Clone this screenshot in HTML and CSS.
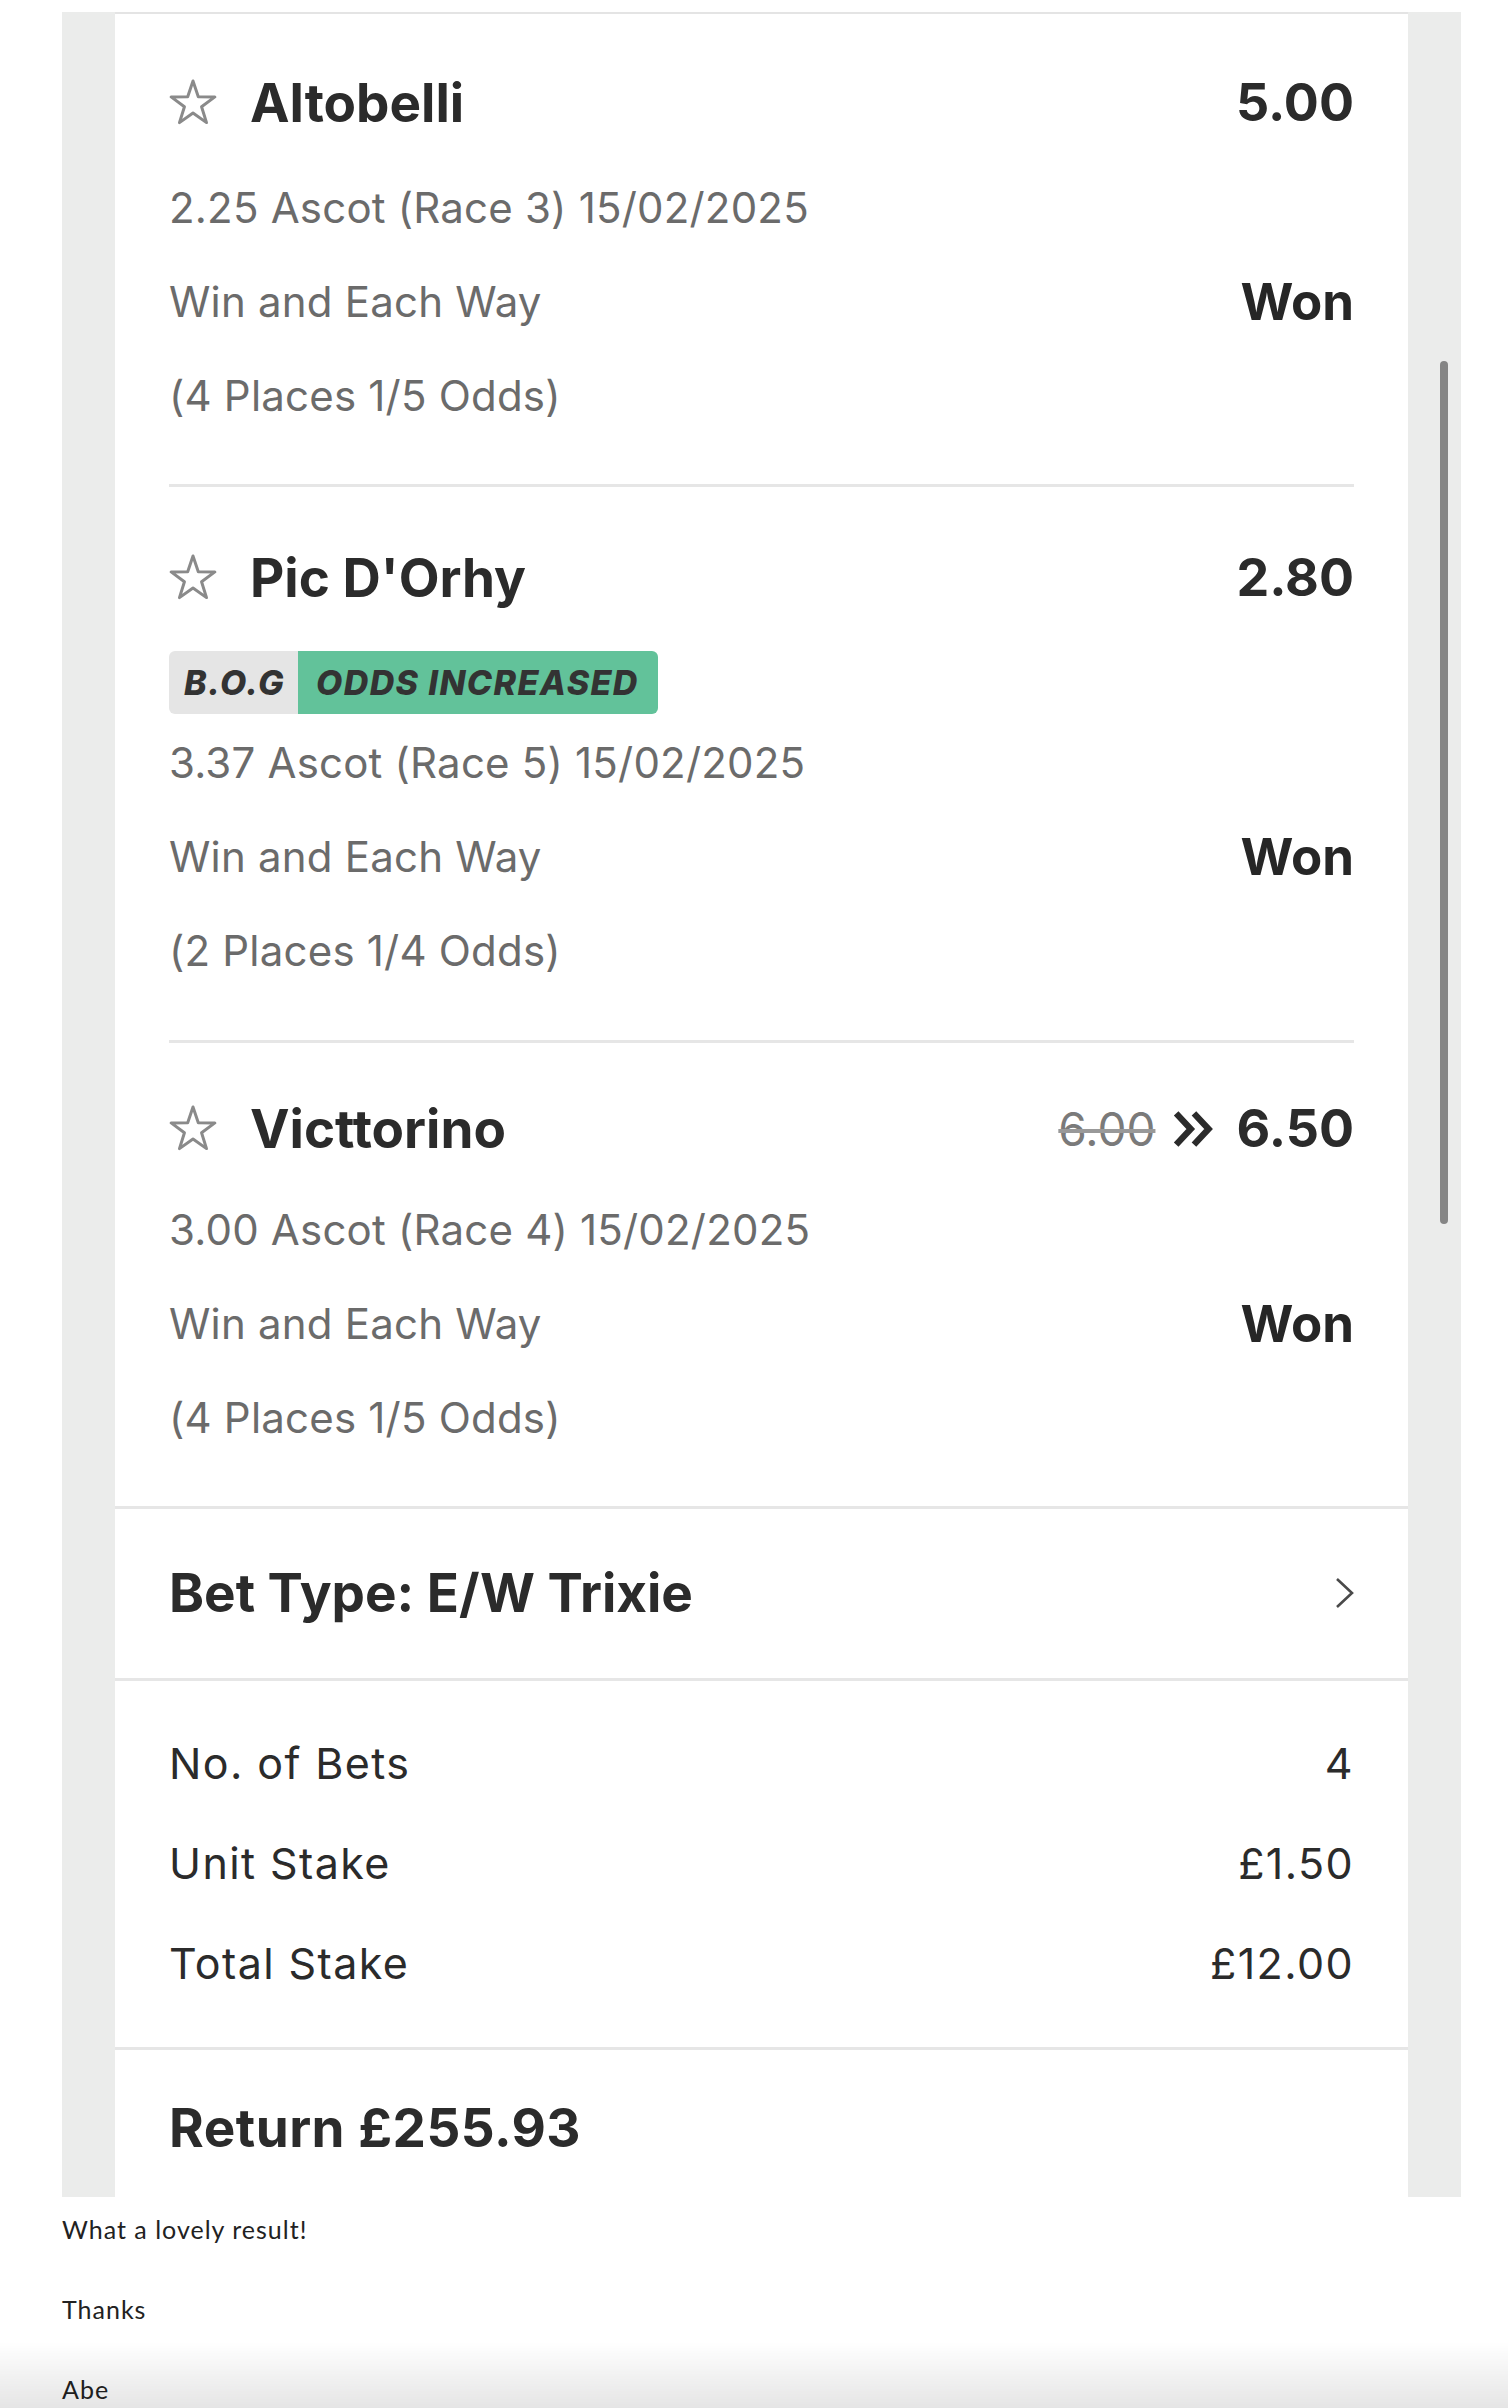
FILE: index.html
```html
<!DOCTYPE html>
<html lang="en">
<head>
<meta charset="utf-8">
<title>Bet receipt</title>
<link rel="stylesheet" href="styles.css">
</head>
<body>
<div class="page">
  <div class="panel">
    <div class="card">
      <div class="legs">
        <div class="leg leg-first">
          <div class="leg-head">
            <svg class="star" viewBox="0 0 48 48"><polygon points="24,2 29.29,17.72 45.87,17.89 32.56,27.78 37.52,43.61 24,34 10.48,43.61 15.44,27.78 2.13,17.89 18.71,17.72"/></svg>
            <span class="name">Altobelli</span>
            <span class="odds">5.00</span>
          </div>
          <div class="info">
            <div class="line">2.25 Ascot (Race 3) 15/02/2025</div>
            <div class="line"><span>Win and Each Way</span><span class="result">Won</span></div>
            <div class="line">(4 Places 1/5 Odds)</div>
          </div>
        </div>
        <div class="leg leg-boosted">
          <div class="leg-head">
            <svg class="star" viewBox="0 0 48 48"><polygon points="24,2 29.29,17.72 45.87,17.89 32.56,27.78 37.52,43.61 24,34 10.48,43.61 15.44,27.78 2.13,17.89 18.71,17.72"/></svg>
            <span class="name">Pic D'Orhy</span>
            <span class="odds">2.80</span>
          </div>
          <div class="badge"><span class="badge-bog">B.O.G</span><span class="badge-odds">ODDS INCREASED</span></div>
          <div class="info info-tight">
            <div class="line">3.37 Ascot (Race 5) 15/02/2025</div>
            <div class="line"><span>Win and Each Way</span><span class="result">Won</span></div>
            <div class="line">(2 Places 1/4 Odds)</div>
          </div>
        </div>
        <div class="leg leg-last">
          <div class="leg-head">
            <svg class="star" viewBox="0 0 48 48"><polygon points="24,2 29.29,17.72 45.87,17.89 32.56,27.78 37.52,43.61 24,34 10.48,43.61 15.44,27.78 2.13,17.89 18.71,17.72"/></svg>
            <span class="name">Victtorino</span>
            <span class="odds odds-change">
              <span class="old-odds">6.00</span>
              <svg class="boost" viewBox="0 0 42 34"><path d="M3 2 L17 17 L3 32 M20 2 L34 17 L20 32"/></svg>
              <span>6.50</span>
            </span>
          </div>
          <div class="info">
            <div class="line">3.00 Ascot (Race 4) 15/02/2025</div>
            <div class="line"><span>Win and Each Way</span><span class="result">Won</span></div>
            <div class="line">(4 Places 1/5 Odds)</div>
          </div>
        </div>
      </div>
      <div class="section bet-type">
        <span class="section-title">Bet Type: E/W Trixie</span>
        <svg class="chevron" viewBox="0 0 20 32"><path d="M2 2 L17 16 L2 30"/></svg>
      </div>
      <div class="section stakes">
        <div class="stake-row"><span>No. of Bets</span><span>4</span></div>
        <div class="stake-row"><span>Unit Stake</span><span>£1.50</span></div>
        <div class="stake-row"><span>Total Stake</span><span>£12.00</span></div>
      </div>
      <div class="section return">
        <span class="section-title return-title">Return £255.93</span>
      </div>
    </div>
    <div class="scrollbar"></div>
  </div>
  <div class="message">
    <p>What a lovely result!</p>
    <p>Thanks</p>
    <p>Abe</p>
  </div>
</div>
<div class="fade"></div>
</body>
</html>
```
FILE: styles.css
```css
html, body {
  margin: 0;
  padding: 0;
  background: #ffffff;
}

body {
  font-family: Inter, "Liberation Sans", Arial, sans-serif;
  color: #2b2b2b;
}

.page {
  padding: 12px 0 0 62px;
}

.panel {
  position: relative;
  width: 1399px;
  height: 2185px;
  box-sizing: border-box;
  padding: 0 53px;
  background: #ebeceb;
  overflow: hidden;
}

.card {
  background: #ffffff;
  border-top: 2px solid #e4e4e4;
}

.legs {
  padding: 0 54px;
}

.leg {
  border-bottom: 3px solid #e6e6e6;
}

.leg-first {
  padding: 57px 0 41px;
}

.leg-boosted {
  padding: 59px 0 42px;
}

.leg-last {
  padding: 54px 0 41px;
  border-bottom: none;
}

.leg-head {
  display: flex;
  align-items: center;
  height: 64px;
}

.star {
  width: 48px;
  height: 48px;
  flex: none;
  margin-right: 33px;
  fill: none;
  stroke: #8a8a8a;
  stroke-width: 3;
  stroke-linejoin: round;
}

.name {
  flex: 1;
  font-size: 53px;
  font-weight: 700;
  color: #2b2b2b;
  line-height: 64px;
}

.odds {
  font-size: 52px;
  font-weight: 700;
  color: #2b2b2b;
  line-height: 64px;
}

.odds-change {
  display: flex;
  align-items: center;
}

.old-odds {
  font-size: 46px;
  font-weight: 400;
  color: #7a7a7a;
  text-decoration: line-through;
  text-decoration-color: #999999;
  text-decoration-thickness: 4px;
  margin-right: 18px;
}

.boost {
  width: 44px;
  height: 36px;
  margin-right: 19px;
  fill: none;
  stroke: #2b2b2b;
  stroke-width: 6;
  stroke-linejoin: miter;
}

.info {
  margin-top: 26px;
}

.leg-last .info {
  margin-top: 22px;
}

.leg-boosted .info {
  margin-top: 2px;
}

.line {
  display: flex;
  justify-content: space-between;
  align-items: center;
  height: 94px;
  line-height: 94px;
  font-size: 42px;
  letter-spacing: 0.2px;
  color: #6b6b6b;
}

.result {
  font-size: 51px;
  font-weight: 700;
  color: #262626;
  letter-spacing: 0;
}

.badge {
  display: flex;
  height: 63px;
  margin-top: 41px;
  width: max-content;
  border-radius: 6px;
  overflow: hidden;
  font-size: 34px;
  font-weight: 800;
  font-style: italic;
  letter-spacing: 1.4px;
  color: #333333;
  line-height: 63px;
}

.badge-bog {
  width: 129px;
  box-sizing: border-box;
  padding-left: 15px;
  background: #e5e5e5;
}

.badge-odds {
  width: 360px;
  box-sizing: border-box;
  padding-left: 18px;
  background: #62c29a;
}

.section {
  border-top: 3px solid #e6e6e6;
  padding: 0 54px;
}

.section-title {
  font-size: 53px;
  font-weight: 700;
  color: #2b2b2b;
  line-height: 64px;
  letter-spacing: 0;
}

.return-title {
  letter-spacing: 0.5px;
}

.bet-type {
  display: flex;
  justify-content: space-between;
  align-items: center;
  padding-top: 52px;
  padding-bottom: 53px;
}

.chevron {
  width: 20px;
  height: 32px;
  margin-right: -1px;
  fill: none;
  stroke: #4a4a4a;
  stroke-width: 2.6;
}

.stakes {
  padding-top: 32px;
  padding-bottom: 34px;
}

.stake-row {
  display: flex;
  justify-content: space-between;
  height: 100px;
  line-height: 100px;
  font-size: 43px;
  letter-spacing: 1.4px;
  color: #2b2b2b;
}

.return {
  padding-top: 46px;
  padding-bottom: 80px;
}

.scrollbar {
  position: absolute;
  left: 1378px;
  top: 349px;
  width: 8px;
  height: 863px;
  border-radius: 4px;
  background: #858585;
}

.message {
  margin-top: 17px;
  font-family: Lato, "Open Sans", sans-serif;
  font-size: 25px;
  line-height: 30px;
  letter-spacing: 1px;
  color: #222222;
}

.message p {
  margin: 0 0 50px;
}

.fade {
  position: fixed;
  left: 0;
  right: 0;
  bottom: 0;
  height: 66px;
  pointer-events: none;
  background: linear-gradient(to bottom, rgba(0, 0, 0, 0), rgba(0, 0, 0, 0.1));
}
```
